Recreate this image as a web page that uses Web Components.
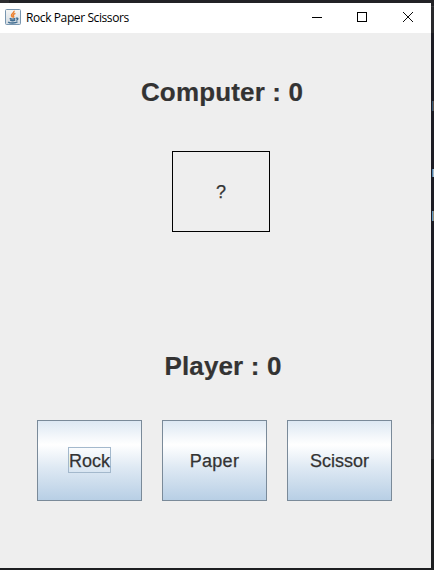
<!DOCTYPE html>
<html lang="en"><head><meta charset="utf-8"><title>Rock Paper Scissors</title>
<style>html,body{margin:0;height:100%;overflow:hidden;background:#222226}body{font-family:"Liberation Sans",Arial,sans-serif;color:#333}</style></head>
<body>
<game-desktop>
<game-window>
<title-bar slot="title">Rock Paper Scissors</title-bar>
<score-label style="--pad:44px;--shift:13px">Computer : 0</score-label>
<choice-box>?</choice-box>
<score-label style="--pad:119px;--shift:15px">Player : 0</score-label>
<button-row><metal-button focused>Rock</metal-button><metal-button style="--track:.25px">Paper</metal-button><metal-button>Scissor</metal-button></button-row>
</game-window>
</game-desktop>
<script>
function define(name, html){
  const t=document.createElement('template');t.innerHTML=html;
  customElements.define(name,class extends HTMLElement{
    constructor(){super();this.attachShadow({mode:'open'}).append(t.content.cloneNode(true));}
  });
}
define('game-desktop',`<style>
:host{display:block;box-sizing:border-box;width:434px;height:570px;padding-top:3px;position:relative;background:linear-gradient(90deg,#2e2e31 9px,#222226 9px) 0 0/100% 3px no-repeat,linear-gradient(#222226 0 6px,#3a3a3d 6px 7px,#29292c 7px 33px,#1c1c24 33px 380px,#27272b 380px 424px,#2b2b2f 424px 459px,#1d1e20 459px) #222226}
i{position:absolute;right:0;width:2px;background:#3b658c}
</style><slot></slot><i style="top:101px;height:10px;background:linear-gradient(90deg,#345574 1px,#5b5048 1px)"></i><i style="top:169px;height:8px;background:linear-gradient(90deg,#4f83af 1px,#a7bac5 1px)"></i><i style="top:211px;height:10px;background:linear-gradient(90deg,#5d95c3 1px,#8c8772 1px)"></i>`);
define('game-window',`<style>
:host{display:flex;flex-direction:column;width:431px;height:565px;background:#eee;overflow:hidden}
</style><slot name="title"></slot><slot></slot>`);
define('title-bar',`<style>
:host{display:flex;align-items:center;box-sizing:border-box;height:30px;flex:none;background:#fff;color:#000;padding-left:5px;font:12px/16px "Open Sans","Noto Sans",sans-serif}
svg{display:block;flex:none}.ico{margin:-2px 5px 0 0}
.name{flex:1;white-space:nowrap;letter-spacing:-.4px}
.ctl{margin-top:-2px}
</style>
<svg class="ico" width="16" height="16" viewBox="0 0 16 16"><defs><linearGradient id="g" x2="0" y2="1"><stop stop-color="#f5f5f4"/><stop offset="1" stop-color="#d4dce3"/></linearGradient></defs><rect x=".5" y=".5" width="15" height="15" rx="1" fill="url(#g)" stroke="#7896b0"/><path d="M9 1.800c.9 2-3 2.800-2.500 4.700.2.900 1 1.300 1.200 2M10.400 4.300c-2 1-2.600 1.800-1.800 2.900.4.600 0 1-.5 1.400" fill="none" stroke="#eb8232" stroke-width="1.500"/><path d="M4.700 9.300c1.300.9 4.200.8 5.700.2M5.200 11.200c1.300.7 3.700.6 5 0M3.200 12.900c1.500 1.600 7.500 1.500 9.300-.1M11 9.200c2.400-.6 2.400 1.500.3 2.200" fill="none" stroke="#3f6c91" stroke-width="1.400"/></svg>
<span class="name"><slot></slot></span>
<svg class="ctl" width="119" height="12" viewBox="0 0 119 12" fill="none" stroke="#000"><path d="M0 6.500h10M45.500 1.500h9v9h-9z" shape-rendering="crispEdges"/><path d="M91 1l10 10M101 1l-10 10" stroke-width=".95"/></svg>`);
define('score-label',`<style>
:host{display:block;flex:none;text-align:center;font-size:26px;font-weight:bold;line-height:30px;letter-spacing:.15px;padding:var(--pad) 0 0 var(--shift);-webkit-text-stroke:.2px #333}
</style><slot></slot>`);
define('choice-box',`<style>
:host{display:grid;place-items:center;flex:none;box-sizing:border-box;width:98px;height:81px;margin:44px 0 0 172px;border:1px solid #000;font-size:18px;line-height:20px;-webkit-text-stroke:.25px #333}
</style><slot></slot>`);
define('button-row',`<style>
:host{display:flex;gap:20px;padding:39px 0 0 37px}
</style><slot></slot>`);
define('metal-button',`<style>
:host{display:grid;place-items:center;box-sizing:border-box;width:105px;height:81px;padding-bottom:1px;border:1px solid #7a8a99;font-size:18px;letter-spacing:var(--track,0);-webkit-text-stroke:.25px #333;background:linear-gradient(#dde8f3,#fff 30%,#dde8f3 60%,#b8cfe5)}
span{box-sizing:border-box;height:26px;line-height:26px;border:1px solid transparent;white-space:nowrap}
:host([focused]) span{width:43px;border-color:#a3b8cc}
</style><span><slot></slot></span>`);
</script>
</body></html>
